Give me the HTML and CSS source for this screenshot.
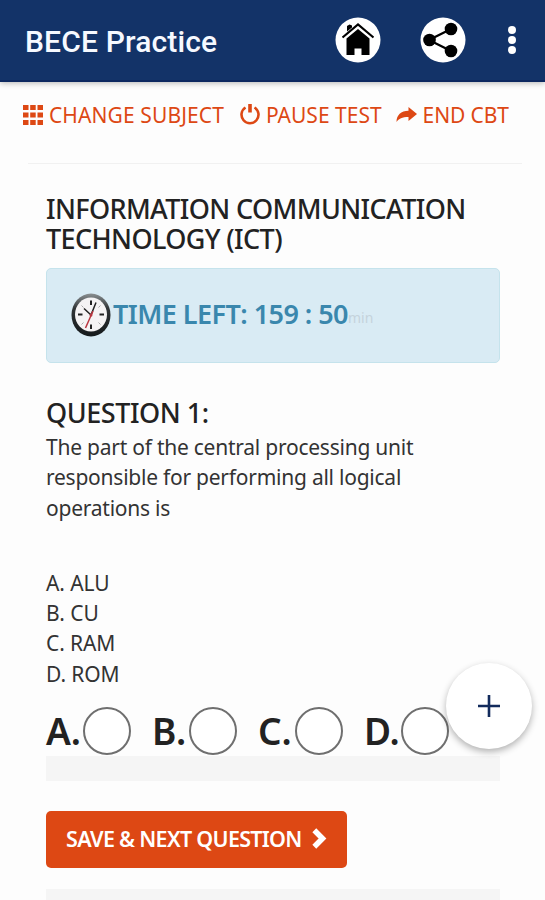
FILE: index.html
```
<!DOCTYPE html>
<html lang="en">
<head>
  <meta charset="UTF-8">
  <title>BECE Practice</title>
  <meta name="viewport" content="width=device-width, initial-scale=1.0">
  <link rel="stylesheet" href="styles.css">
</head>
<body>

<header class="app-bar">
  <div class="app-title">BECE Practice</div>
  <a class="home" aria-label="Home">
    <svg width="46" height="46" viewBox="0 0 46 46">
      <circle cx="23" cy="23" r="22.5" fill="#fff"/>
      <path d="M12 14.500V9L14.500 7.500l2.500 1v2z"/>
      <path d="M7.500 20.500L23 7.500l15.500 13" fill="none" stroke="#000" stroke-width="2.2"/>
      <path d="M11.500 21.500L23 12l11.500 9.500V38h-8v-6.500h-7V38h-8z"/>
    </svg>
  </a>
  <a class="share" aria-label="Share">
    <svg width="46" height="46" viewBox="0 0 46 46">
      <circle cx="23" cy="23" r="22.5" fill="#fff"/>
      <path d="M31 12L9 23l22 11" fill="none" stroke="#000" stroke-width="2.3"/>
      <circle cx="31" cy="12" r="6.3"/>
      <circle cx="9.5" cy="23" r="6.3"/>
      <circle cx="31" cy="34" r="6.3"/>
    </svg>
  </a>
  <div class="dots"><span></span><span></span><span></span></div>
</header>

<nav class="test-menu">
  <a class="menu-link">
    <svg width="20" height="20" viewBox="0 0 20 20" fill="currentColor">
      <path d="M0 0h5.500v5H0zM7.200 0h5.500v5H7.200zM14.500 0H20v5h-5.500zM0 7.500h5.500v5H0zM7.200 7.500h5.500v5H7.200zM14.500 7.500H20v5h-5.500zM0 15h5.500v5H0zM7.200 15h5.500v5H7.200zM14.500 15H20v5h-5.500z"/>
    </svg>
    <span class="change">CHANGE SUBJECT</span>
  </a>
  <a class="menu-link">
    <svg width="20" height="22" viewBox="0 0 20 22" fill="none" stroke="currentColor">
      <path d="M5.500 3.500A8.500 8.500 0 1 0 14.500 3.500" stroke-width="2.6"/>
      <path d="M10 0v8.500" stroke-width="3.6"/>
    </svg>
    <span>PAUSE TEST</span>
  </a>
  <a class="menu-link end">
    <svg width="21" height="16" viewBox="0 0 21 16" fill="currentColor">
      <path d="M12.500 0L21 7l-8.500 7v-4C6 10 3 11.500 .5 15 .5 8 5 3.700 12.500 3.700z"/>
    </svg>
    <span>END CBT</span>
  </a>
</nav>

<main class="content">
  <h1 class="subject">INFORMATION COMMUNICATION TECHNOLOGY (ICT)</h1>

  <div class="timer">
    <svg width="40" height="44" viewBox="0 0 40 44">
      <defs>
        <linearGradient id="rim" x1="0" y1="0" x2="0" y2="1">
          <stop offset="0" stop-color="#8b9092"/>
          <stop offset=".35" stop-color="#303436"/>
          <stop offset="1" stop-color="#15191b"/>
        </linearGradient>
      </defs>
      <ellipse cx="20" cy="22" rx="19.500" ry="21.500" fill="url(#rim)"/>
      <ellipse cx="20" cy="21.500" rx="16" ry="17" fill="#f5f3f4"/>
      <path d="M20 7.500v4.500M20 31.500v4.500M7 21.500h4.500M28.500 21.500h4.500" stroke="#222" stroke-width="2"/>
      <path d="M10.500 12.500l2 2M29.500 12.500l-2 2M10.500 31.500l2-2M29.500 31.500l-2-2" stroke="#aaa"/>
      <path d="M13 15.500L20 22l5-12.500" fill="none" stroke="#222" stroke-width="1.5"/>
      <path d="M22 18L14.500 35" stroke="#b9353f" stroke-width="1.5"/>
      <circle cx="20" cy="22" r="1.5" fill="#b9353f"/>
    </svg>
    <span class="time-left">TIME LEFT: 159 : 50</span>
    <small class="unit">min</small>
  </div>

  <h2 class="question-no">QUESTION 1:</h2>
  <p class="question">The part of the central processing unit responsible for performing all logical operations is</p>

  <div class="options">
    <div>A. ALU</div>
    <div>B. CU</div>
    <div>C. RAM</div>
    <div>D. ROM</div>
  </div>

  <form class="answers">
    <label class="answer"><span>A.</span><input type="radio" name="answer"></label>
    <label class="answer"><span>B.</span><input type="radio" name="answer"></label>
    <label class="answer"><span>C.</span><input type="radio" name="answer"></label>
    <label class="answer"><span>D.</span><input type="radio" name="answer"></label>
  </form>
  <div class="strip"></div>

  <button class="save">
    <span>SAVE &amp; NEXT QUESTION</span>
    <svg width="15" height="21" viewBox="0 0 15 21" fill="none" stroke="#fff" stroke-width="5.5">
      <path d="M2.300 2.300l8.200 8.200-8.200 8.200"/>
    </svg>
  </button>
  <div class="strip"></div>
</main>

<a class="fab" aria-label="Add">
  <svg width="22" height="22" viewBox="0 0 22 22">
    <path d="M11 0v22M0 11h22" stroke="#122b5c" stroke-width="2.6"/>
  </svg>
</a>

</body>
</html>
```

FILE: styles.css
```
* {
  box-sizing: border-box;
}
body {
  margin: 0;
  height: 900px;
  overflow: hidden;
  font-family: 'Noto Sans', 'Open Sans', sans-serif;
  background: #fdfdfd;
  color: #222;
}
svg {
  display: block;
  flex: none;
}
.app-bar {
  display: flex;
  align-items: center;
  height: 82px;
  padding: 0 29px 0 25px;
  background: #133368;
  border-bottom: 2px solid #0c2860;
  box-shadow: 0 1px 6px rgba(0,0,0,0.3);
}
.app-title {
  flex: 1;
  font-family: Roboto, sans-serif;
  font-size: 30px;
  font-weight: 500;
  letter-spacing: 0.15px;
  color: #f6f9ff;
  padding-top: 3px;
}
.share {
  margin: 0 42px 0 39px;
}
.dots {
  display: flex;
  flex-direction: column;
  gap: 2px;
  width: 8px;
}
.dots span {
  width: 8px;
  height: 8px;
  border-radius: 50%;
  background: #fff;
}
.test-menu {
  display: flex;
  align-items: center;
  gap: 16px;
  height: 82px;
  margin: 0 23px 0 28px;
  padding-bottom: 16px;
  border-bottom: 1px solid #f1f1f1;
  color: #dd4814;
  font-size: 21px;
  white-space: nowrap;
}
.menu-link {
  display: flex;
  align-items: center;
  gap: 6px;
}
.menu-link:first-child {
  margin-left: -5px;
}
.change {
  letter-spacing: 0.1px;
}
.end {
  margin-left: -2px;
  letter-spacing: -0.1px;
}
.content {
  padding: 30px 45px 0 46px;
}
.subject, .question-no {
  margin: 0;
  font-size: 27px;
  font-weight: 500;
  line-height: 30px;
  letter-spacing: -0.62px;
}
.question-no {
  letter-spacing: -0.45px;
}
.timer {
  display: flex;
  align-items: center;
  height: 95px;
  margin: 14px 0 35px;
  padding: 0 25px 2px 24px;
  background: #d9ebf4;
  border: 1px solid #c5e3ec;
  border-radius: 5px;
  color: #3a87ad;
  white-space: nowrap;
}
.time-left {
  margin: -2px 0 0 2px;
  font-size: 27px;
  font-weight: 600;
  letter-spacing: -0.55px;
}
.unit {
  font-size: 14px;
  color: #c5d3dc;
  padding-top: 6px;
}
.question, .options {
  margin: 4px 0 0;
  font-size: 21px;
  line-height: 30.3px;
  letter-spacing: -0.24px;
  color: #333;
}
.question {
  width: 400px;
}
.options {
  margin-top: 45px;
  letter-spacing: -0.1px;
}
.answers {
  display: flex;
  height: 67px;
  padding-top: 18px;
}
.answer {
  display: flex;
  align-items: center;
  justify-content: space-between;
  height: 48px;
  width: 85px;
  margin-right: 21px;
  font-size: 37px;
  font-weight: 600;
}
.answer span {
  padding-bottom: 2px;
}
.answer input {
  appearance: none;
  flex: none;
  width: 48px;
  height: 48px;
  margin: 0;
  border: 2px solid #6f6f6f;
  border-radius: 50%;
  background: #fff;
}
.strip {
  height: 25px;
  background: #f5f5f5;
}
.save {
  display: flex;
  align-items: center;
  justify-content: space-between;
  width: 301px;
  height: 57px;
  margin: 30px 0 21px;
  padding: 0 20px 3px;
  border: 0;
  border-radius: 5px;
  background: #dd4814;
  color: #fff;
  font: 600 21.5px 'Noto Sans', sans-serif;
  letter-spacing: -0.7px;
  white-space: nowrap;
}
.fab {
  position: fixed;
  top: 663px;
  left: 446px;
  display: flex;
  align-items: center;
  justify-content: center;
  width: 86px;
  height: 86px;
  border-radius: 50%;
  background: #fff;
  box-shadow: 0 3px 7px rgba(0,0,0,0.3);
}
```
